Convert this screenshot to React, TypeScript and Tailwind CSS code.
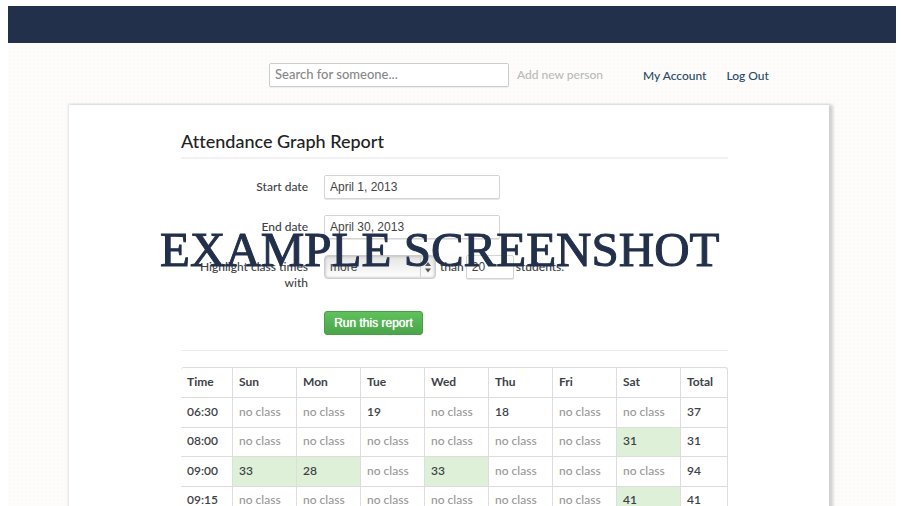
import React from "react";

const days = ["Sun", "Mon", "Tue", "Wed", "Thu", "Fri", "Sat"];

type Row = { time: string; counts: (number | null)[]; total: number };

const rows: Row[] = [
  { time: "06:30", counts: [null, null, 19, null, 18, null, null], total: 37 },
  { time: "08:00", counts: [null, null, null, null, null, null, 31], total: 31 },
  { time: "09:00", counts: [33, 28, null, 33, null, null, null], total: 94 },
  { time: "09:15", counts: [null, null, null, null, null, null, 41], total: 41 },
];

const field =
  "h-6 rounded-[2px] border border-[#d4d4d4] bg-white px-[5px] font-['Liberation_Sans',sans-serif] text-[12px] text-[#444] shadow-[0_1px_0_#e6e6e6] outline-none";

function Label({ id, children }: { id: string; children: React.ReactNode }) {
  return (
    <label htmlFor={id} className="w-[127px] shrink-0 pt-1 text-right leading-4">
      {children}
    </label>
  );
}

function Header() {
  return (
    <header className="flex h-[62px] items-start pt-5 pl-[261px]">
      <input
        type="search"
        aria-label="Search for someone"
        placeholder="Search for someone..."
        className="h-6 w-60 rounded-[2px] border border-[#ccc] bg-white px-[5px] pb-[3px] text-[13px] shadow-[0_1px_0_#eee] outline-none placeholder:text-[#888]"
      />
      <a href="#add" className="ml-2 leading-6 text-[#b9bab9]">
        Add new person
      </a>
      <nav className="ml-10 flex gap-5 pt-px leading-6 text-[#294a66]">
        <a href="#account">My Account</a>
        <a href="#logout">Log Out</a>
      </nav>
    </header>
  );
}

function ReportForm() {
  return (
    <form className="mt-4 flex flex-col gap-4 border-b border-[#ebebeb] pb-[15px]" onSubmit={(e) => e.preventDefault()}>
      <div className="flex gap-4">
        <Label id="start">Start date</Label>
        <input id="start" defaultValue="April 1, 2013" className={`${field} w-44`} />
      </div>
      <div className="flex gap-4">
        <Label id="end">End date</Label>
        <input id="end" defaultValue="April 30, 2013" className={`${field} w-44`} />
      </div>
      <div className="flex h-10 gap-4">
        <Label id="compare">Highlight class times with</Label>
        <div className="flex h-6 items-center gap-0.5">
          <div className="relative mr-0.5">
            <select
              id="compare"
              className="block h-6 w-28 appearance-none rounded-[4px] border border-[#ccc] bg-linear-to-b from-[#e4e4e4] to-white px-[5px] font-['Liberation_Sans',sans-serif] text-[12px] text-[#444] shadow-[inset_0_0_3px_#aaa] outline-none"
            >
              <option>more</option>
              <option>fewer</option>
            </select>
            <svg className="pointer-events-none absolute top-0 right-0 h-6 w-4" viewBox="0 0 16 24" aria-hidden="true">
              <path d="M.5 2v20" stroke="#d0d0d0" />
              <path d="M5 11l3-4 3 4zM5 13.500l3 4 3-4z" fill="#555" />
            </svg>
          </div>
          <span>than</span>
          <input aria-label="Number of students" defaultValue="20" className={`${field} w-12`} />
          <span>students.</span>
        </div>
      </div>
      <button
        type="submit"
        className="ml-[143px] h-6 w-[99px] rounded-[3px] border border-[#4a9e48] bg-linear-to-b from-[#5fc15c] to-[#4ba549] font-['Liberation_Sans',sans-serif] text-[12px] text-white [text-shadow:0_0_1px_#fff]"
      >
        Run this report
      </button>
    </form>
  );
}

function ReportTable() {
  return (
    <table className="mt-4 w-full table-fixed border-separate border-spacing-0 rounded-[3px] border-t border-r border-[#ddd] text-left">
      <colgroup>
        <col className="w-[51px]" />
        {days.map((d) => (
          <col key={d} />
        ))}
        <col className="w-[47px]" />
      </colgroup>
      <thead>
        <tr className="h-[29px]">
          <th className="pb-0.5 pl-1.5 font-bold">Time</th>
          {[...days, "Total"].map((d) => (
            <th key={d} className="border-l border-[#ddd] pb-0.5 pl-1.5 font-bold">
              {d}
            </th>
          ))}
        </tr>
      </thead>
      <tbody>
        {rows.map((row) => (
          <tr key={row.time} className="odd:h-[30px] even:h-[29px]">
            <th className="border-t border-[#ddd] pb-0.5 pl-1.5 font-semibold">{row.time}</th>
            {row.counts.map((n, i) => (
              <td
                key={days[i]}
                className={
                  n === null
                    ? "border-t border-l border-[#ddd] pb-0.5 pl-1.5 text-[#989898]"
                    : n > 20
                      ? "border-t border-l border-[#ddd] bg-[#dff0d8] pb-0.5 pl-1.5 font-semibold"
                      : "border-t border-l border-[#ddd] pb-0.5 pl-1.5 font-semibold"
                }
              >
                {n ?? "no class"}
              </td>
            ))}
            <td className="border-t border-l border-[#ddd] pb-0.5 pl-1.5 font-semibold">{row.total}</td>
          </tr>
        ))}
      </tbody>
    </table>
  );
}

export default function App() {
  return (
    <div className="relative h-screen overflow-hidden bg-white pt-1.5 pr-[5px] pl-2 font-['Lato',sans-serif] text-[12px] font-medium text-[#3d4247]">
      <div className="min-h-full bg-[#fdfcfa] bg-[radial-gradient(#fcfaf8_1px,transparent_1px)] bg-size-[4px_4px]">
        <div className="h-[37px] bg-[#22304b]" />
        <Header />
        <main className="mr-[67px] ml-[61px] min-h-screen bg-white pt-6 pr-[101px] pl-28 shadow-[3px_1px_3px_1px_#d0d0d0,0_0_2px_1px_#e2e2e2]">
          <h1 className="border-b-2 border-[#f1f1f1] pb-1 text-[18px] leading-6 text-[#222] [font-variant-ligatures:none]">
            Attendance Graph Report
          </h1>
          <ReportForm />
          <ReportTable />
        </main>
      </div>
      <div className="pointer-events-none absolute top-[222px] left-[160px] font-['Liberation_Serif',serif] text-[49px] leading-[56px] font-normal whitespace-nowrap text-[#22304b] [-webkit-text-stroke:1px_#22304b]">
        EXAMPLE SCREENSHOT
      </div>
    </div>
  );
}
